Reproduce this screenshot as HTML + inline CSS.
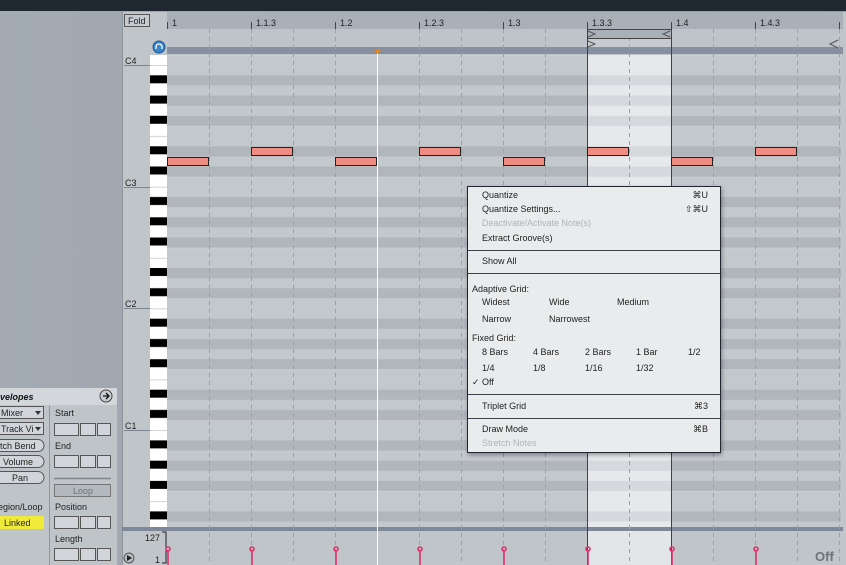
<!DOCTYPE html>
<html><head><meta charset="utf-8"><style>
html,body{margin:0;padding:0;width:846px;height:565px;overflow:hidden;background:#9ea5ad;font-family:"Liberation Sans",sans-serif}
svg text{font-family:"Liberation Sans",sans-serif}
.menu{position:absolute;left:467px;top:186px;width:252px;height:265px;background:#e9ebed;border:1px solid #1f2630;box-shadow:1px 2px 4px rgba(0,0,0,.35);font-size:9px;color:#222}
.menu div{position:absolute;white-space:nowrap}
.sep{left:0;right:0;height:0;border-top:1px solid #3a414b}
.dis{color:#b0b4b9}
.sc{right:12px}
</style></head><body>
<svg width="846" height="565" style="position:absolute;left:0;top:0">
<defs>
<linearGradient id="lg" x1="0" x2="1"><stop offset="0" stop-color="#a3aab2"/><stop offset="1" stop-color="#939ba4"/></linearGradient>
<pattern id="rows" patternUnits="userSpaceOnUse" x="0" y="55" width="846" height="121.7">
<rect width="846" height="121.7" fill="#c3c8cd"/>
<rect y="20.3" width="846" height="10.1" fill="#b1b6bc"/>
<rect y="40.6" width="846" height="10.1" fill="#b1b6bc"/>
<rect y="60.8" width="846" height="10.1" fill="#b1b6bc"/>
<rect y="91.3" width="846" height="10.1" fill="#b1b6bc"/>
<rect y="111.5" width="846" height="10.2" fill="#b1b6bc"/>
<rect y="0" width="846" height="0.8" fill="#ccd0d4"/>
<rect y="71" width="846" height="0.8" fill="#ccd0d4"/>
</pattern>
<pattern id="rowsL" patternUnits="userSpaceOnUse" x="0" y="55" width="846" height="121.7">
<rect width="846" height="121.7" fill="#e6e8eb"/>
<rect y="20.3" width="846" height="10.1" fill="#d5d8dc"/>
<rect y="40.6" width="846" height="10.1" fill="#d5d8dc"/>
<rect y="60.8" width="846" height="10.1" fill="#d5d8dc"/>
<rect y="91.3" width="846" height="10.1" fill="#d5d8dc"/>
<rect y="111.5" width="846" height="10.2" fill="#d5d8dc"/>
</pattern>
<pattern id="keys" patternUnits="userSpaceOnUse" x="0" y="55" width="846" height="121.7">
<rect width="846" height="121.7" fill="#fff"/>
<rect y="10.1" width="846" height="0.8" fill="#c8c8c8"/>
<rect y="20.3" width="846" height="8" fill="#000"/>
<rect y="40.6" width="846" height="8" fill="#000"/>
<rect y="60.8" width="846" height="8" fill="#000"/>
<rect y="81.1" width="846" height="0.8" fill="#c8c8c8"/>
<rect y="91.3" width="846" height="8" fill="#000"/>
<rect y="111.5" width="846" height="8" fill="#000"/>
</pattern>
</defs>
<rect width="846" height="565" fill="url(#lg)"/>
<rect width="846" height="11" fill="#1f2731"/>
<rect x="122" y="12" width="724" height="553" fill="#c0c5ca"/>
<rect x="122" y="12" width="1" height="553" fill="#8d949c"/>
<!-- ruler -->
<rect x="167" y="12" width="676" height="17" fill="#a9b0b8"/>
<rect x="167" y="29" width="676" height="18" fill="#bfc4ca"/>
<rect x="167" y="47" width="676" height="7" fill="#8690a0"/>
<!-- grid -->
<rect x="167" y="55" width="674" height="472" fill="url(#rows)"/>
<rect x="587" y="29" width="84" height="18" fill="#c7cbd0"/>
<rect x="587" y="55" width="84" height="472" fill="url(#rowsL)"/>
<rect x="587" y="531" width="84" height="34" fill="#e3e6e9"/>
<rect x="167" y="527" width="676" height="4" fill="#7e8899"/>
<rect x="150" y="55" width="17" height="472" fill="url(#keys)"/>
<rect x="122" y="527" width="45" height="4" fill="#7e8899"/>
<g stroke="#9aa0a7" stroke-width="1" stroke-dasharray="4,4">
<line x1="209.5" y1="29" x2="209.5" y2="565"/><line x1="251.5" y1="29" x2="251.5" y2="565"/><line x1="293.5" y1="29" x2="293.5" y2="565"/><line x1="335.5" y1="29" x2="335.5" y2="565"/><line x1="419.5" y1="29" x2="419.5" y2="565"/><line x1="461.5" y1="29" x2="461.5" y2="565"/><line x1="503.5" y1="29" x2="503.5" y2="565"/><line x1="545.5" y1="29" x2="545.5" y2="565"/><line x1="629.5" y1="29" x2="629.5" y2="565"/><line x1="713.5" y1="29" x2="713.5" y2="565"/><line x1="755.5" y1="29" x2="755.5" y2="565"/><line x1="797.5" y1="29" x2="797.5" y2="565"/><line x1="839.5" y1="29" x2="839.5" y2="565"/>
</g>
<!-- ruler ticks/labels -->
<g stroke="#444" stroke-width="1">
<line x1="167.5" y1="22" x2="167.5" y2="29"/><line x1="251.5" y1="22" x2="251.5" y2="29"/><line x1="335.5" y1="22" x2="335.5" y2="29"/><line x1="419.5" y1="22" x2="419.5" y2="29"/><line x1="503.5" y1="22" x2="503.5" y2="29"/><line x1="587.5" y1="22" x2="587.5" y2="29"/><line x1="671.5" y1="22" x2="671.5" y2="29"/><line x1="755.5" y1="22" x2="755.5" y2="29"/><line x1="839.5" y1="22" x2="839.5" y2="29"/>
</g>
<g font-size="9" fill="#222">
<text x="172" y="26">1</text><text x="256" y="26">1.1.3</text><text x="340" y="26">1.2</text><text x="424" y="26">1.2.3</text><text x="508" y="26">1.3</text><text x="592" y="26">1.3.3</text><text x="676" y="26">1.4</text><text x="760" y="26">1.4.3</text>
</g>
<!-- loop brace -->
<rect x="587.5" y="29.5" width="84" height="9" fill="#a9b0b8" stroke="#444"/>
<path d="M588 31 L595 34 L588 37 M670 31 L663 34 L670 37 M588 41 L595 44 L588 47 M838 40 L830 44 L838 48" fill="none" stroke="#555"/>
<line x1="587.5" y1="29" x2="587.5" y2="565" stroke="#3c434d"/>
<line x1="671.5" y1="29" x2="671.5" y2="565" stroke="#3c434d"/>
<!-- playhead -->
<line x1="377.5" y1="50" x2="377.5" y2="565" stroke="#fff"/>
<path d="M374 50 L381 50 L377.5 54 Z" fill="#e08a20"/>
<!-- notes -->
<g fill="#ef8d82" stroke="#222" stroke-width="1">
<rect x="167.5" y="157.5" width="41" height="8"/><rect x="335.5" y="157.5" width="41" height="8"/><rect x="503.5" y="157.5" width="41" height="8"/><rect x="671.5" y="157.5" width="41" height="8"/>
<rect x="251.5" y="147.5" width="41" height="8"/><rect x="419.5" y="147.5" width="41" height="8"/><rect x="587.5" y="147.5" width="41" height="8"/><rect x="755.5" y="147.5" width="41" height="8"/>
</g>
<!-- labels -->
<g font-size="9" fill="#222"><text x="125" y="64">C4</text><text x="125" y="186">C3</text><text x="125" y="307">C2</text><text x="125" y="429">C1</text></g>
<g stroke="#7c8590"><line x1="124" y1="65.5" x2="150" y2="65.5"/><line x1="124" y1="187.5" x2="150" y2="187.5"/><line x1="124" y1="308.5" x2="150" y2="308.5"/><line x1="124" y1="430.5" x2="150" y2="430.5"/></g>
<rect x="124.5" y="14.5" width="25" height="12" fill="#c6cbd0" stroke="#555"/>
<text x="128" y="24" font-size="9" fill="#222">Fold</text>
<circle cx="159" cy="47" r="6" fill="#3a84c8" stroke="#1f5a95"/>
<path d="M156 49 v-2 a3 3 0 0 1 6 0 v2" fill="none" stroke="#fff" stroke-width="1.3"/>
<!-- velocity -->
<text x="160" y="541" font-size="9" fill="#222" text-anchor="end">127</text>
<text x="160" y="563" font-size="9" fill="#222" text-anchor="end">1</text>
<path d="M162 532 H166 V563 H162" fill="none" stroke="#222"/>
<circle cx="129" cy="558" r="5" fill="#b5bbc1" stroke="#555"/><path d="M127 555 L132 558 L127 561Z" fill="#222"/>
<g stroke="#e0306a" stroke-width="1.6" fill="none">
<path d="M168 551 V565 M252 551 V565 M336 551 V565 M420 551 V565 M504 551 V565 M588 551 V565 M672 551 V565 M756 551 V565"/>
<circle cx="168" cy="549" r="2"/><circle cx="252" cy="549" r="2"/><circle cx="336" cy="549" r="2"/><circle cx="420" cy="549" r="2"/><circle cx="504" cy="549" r="2"/><circle cx="588" cy="549" r="2"/><circle cx="672" cy="549" r="2"/><circle cx="756" cy="549" r="2"/>
</g>
<text x="815" y="561" font-size="13" font-weight="bold" fill="#6c727a">Off</text>
<!-- envelopes panel -->
<rect x="0" y="388" width="117" height="177" fill="#bfc4c9"/>
<rect x="0" y="388" width="117" height="17" fill="#d3d7db"/>
<text x="0" y="400" font-size="9" font-weight="bold" font-style="italic" fill="#111">velopes</text>
<circle cx="106" cy="396" r="6" fill="#c8cdd2" stroke="#444"/><path d="M103 396 H109 M106 393 L109 396 L106 399" stroke="#111" fill="none" stroke-width="1.3"/>
<line x1="49.5" y1="406" x2="49.5" y2="565" stroke="#8f969e"/>
<g fill="#d1d5d9" stroke="#555">
<rect x="-2.5" y="406.5" width="46" height="12"/><rect x="-2.5" y="422.5" width="46" height="12"/>
<rect x="-5" y="439.5" width="49" height="12" rx="6"/><rect x="-5" y="455.5" width="49" height="12" rx="6"/><rect x="-5" y="471.5" width="49" height="12" rx="6"/>
<rect x="54.5" y="423.5" width="24" height="12"/><rect x="80.5" y="423.5" width="15" height="12"/><rect x="97.5" y="423.5" width="13" height="12"/>
<rect x="54.5" y="455.5" width="24" height="12"/><rect x="80.5" y="455.5" width="15" height="12"/><rect x="97.5" y="455.5" width="13" height="12"/>
<rect x="54.5" y="516.5" width="24" height="12"/><rect x="80.5" y="516.5" width="15" height="12"/><rect x="97.5" y="516.5" width="13" height="12"/>
<rect x="54.5" y="548.5" width="24" height="12"/><rect x="80.5" y="548.5" width="15" height="12"/><rect x="97.5" y="548.5" width="13" height="12"/>
</g>
<rect x="54.5" y="484.5" width="56" height="12" fill="#b3b9bf" stroke="#777"/>
<line x1="54" y1="478.5" x2="111" y2="478.5" stroke="#7d858e" stroke-width="1.5"/>
<rect x="-1" y="516" width="45" height="13" fill="#f0ea3a"/>
<g font-size="9" fill="#222">
<text x="1" y="416">Mixer</text><text x="1" y="432">Track Vi</text><text x="-2" y="449">itch Bend</text><text x="3" y="465">Volume</text><text x="12" y="481">Pan</text>
<text x="-2" y="510">egion/Loop</text><text x="4" y="526">Linked</text>
<text x="55" y="416">Start</text><text x="55" y="449">End</text><text x="55" y="510">Position</text><text x="55" y="542">Length</text>
<text x="73" y="494" fill="#6b727a">Loop</text>
</g>
<path d="M35 411 L41 411 L38 415Z M35 427 L41 427 L38 431Z" fill="#333"/>
</svg>
<div class="menu">
<div style="left:14px;top:3px">Quantize</div><div class="sc" style="top:3px">⌘U</div>
<div style="left:14px;top:17px">Quantize Settings...</div><div class="sc" style="top:17px">⇧⌘U</div>
<div class="dis" style="left:14px;top:31px">Deactivate/Activate Note(s)</div>
<div style="left:14px;top:46px">Extract Groove(s)</div>
<div class="sep" style="top:63px"></div>
<div style="left:14px;top:69px">Show All</div>
<div class="sep" style="top:86px"></div>
<div style="left:4px;top:97px">Adaptive Grid:</div>
<div style="left:14px;top:110px">Widest</div><div style="left:81px;top:110px">Wide</div><div style="left:149px;top:110px">Medium</div>
<div style="left:14px;top:127px">Narrow</div><div style="left:81px;top:127px">Narrowest</div>
<div style="left:4px;top:146px">Fixed Grid:</div>
<div style="left:14px;top:160px">8 Bars</div><div style="left:65px;top:160px">4 Bars</div><div style="left:117px;top:160px">2 Bars</div><div style="left:168px;top:160px">1 Bar</div><div style="left:220px;top:160px">1/2</div>
<div style="left:14px;top:176px">1/4</div><div style="left:65px;top:176px">1/8</div><div style="left:117px;top:176px">1/16</div><div style="left:168px;top:176px">1/32</div>
<div style="left:4px;top:190px">✓ Off</div>
<div class="sep" style="top:207px"></div>
<div style="left:14px;top:214px">Triplet Grid</div><div class="sc" style="top:214px">⌘3</div>
<div class="sep" style="top:231px"></div>
<div style="left:14px;top:237px">Draw Mode</div><div class="sc" style="top:237px">⌘B</div>
<div class="dis" style="left:14px;top:251px">Stretch Notes</div>
</div>
</body></html>
